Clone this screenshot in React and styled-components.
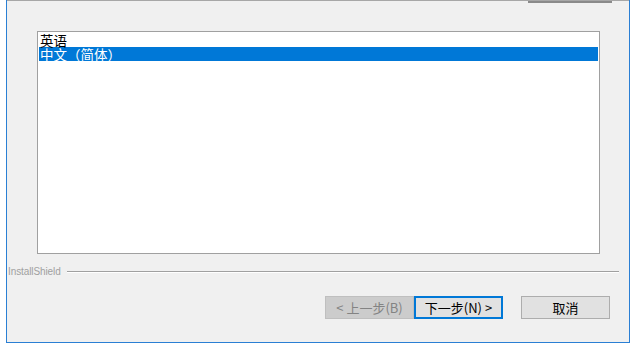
import React, { useState } from "react";
import styled, { createGlobalStyle } from "styled-components";

const GlobalStyle = createGlobalStyle`
  html, body {
    margin: 0;
    padding: 0;
    background: #ffffff;
  }
  body {
    font-family: "Noto Sans CJK SC", "Liberation Sans", sans-serif;
  }
`;

const Window = styled.div`
  box-sizing: border-box;
  width: 624px;
  height: 343px;
  margin-left: 6px;
  background: #f0f0f0;
  border-left: 1px solid #2a7fd4;
  border-right: 1px solid #2a7fd4;
  border-bottom: 1px solid #2a7fd4;
  display: flex;
  flex-direction: column;
`;

const TopEdge = styled.div`
  display: flex;
  justify-content: flex-end;
  height: 3px;
  border-top: 1px solid #a7a7a7;
  box-sizing: border-box;
`;

const ButtonStub = styled.div`
  width: 84px;
  height: 2px;
  margin-right: 17px;
  background: #8a8a8a;
`;

const ListBox = styled.ul`
  box-sizing: border-box;
  list-style: none;
  margin: 28px 0 0 30px;
  padding: 1px;
  width: 563px;
  height: 223px;
  background: #ffffff;
  border: 1px solid #a0a0a0;
`;

const Item = styled.li`
  height: 14px;
  line-height: 14px;
  font-size: 13.5px;
  padding-left: 1px;
  color: ${(p) => (p.$selected ? "#ffffff" : "#000000")};
  background: ${(p) => (p.$selected ? "#0078d7" : "transparent")};
  cursor: default;
  white-space: nowrap;
`;

const BrandRow = styled.div`
  display: flex;
  align-items: center;
  gap: 6px;
  margin: 12px 10px 0 1px;
`;

const Brand = styled.span`
  font-family: "Liberation Sans", Arial, sans-serif;
  font-size: 10px;
  letter-spacing: -0.1px;
  color: #a0a0a0;
`;

const Rule = styled.div`
  flex: 1;
  height: 1px;
  background: #a0a0a0;
  border-bottom: 1px solid #ffffff;
`;

const ButtonRow = styled.div`
  display: flex;
  justify-content: flex-end;
  margin: 19px 19px 0 0;
`;

const Button = styled.button`
  box-sizing: border-box;
  width: 89px;
  height: 23px;
  margin-left: ${(p) => p.$gap || 0}px;
  padding: 0;
  font-family: "Noto Sans CJK SC", "Liberation Sans", sans-serif;
  font-size: 13px;
  line-height: 19px;
  background: ${(p) => (p.disabled ? "#cccccc" : "#e1e1e1")};
  color: ${(p) => (p.disabled ? "#838383" : "#000000")};
  border: ${(p) =>
    p.$focus ? "2px solid #0078d7" : p.disabled ? "1px solid #bfbfbf" : "1px solid #adadad"};
  outline: none;
  white-space: nowrap;
`;

const languages = ["英语", "中文（简体）"];

export default function App() {
  const [sel, setSel] = useState(1);

  return (
    <>
      <GlobalStyle />
      <Window>
        <TopEdge>
          <ButtonStub />
        </TopEdge>
        <ListBox>
          {languages.map((l, i) => (
            <Item key={l} $selected={i === sel} onClick={() => setSel(i)}>
              {l}
            </Item>
          ))}
        </ListBox>
        <BrandRow>
          <Brand>InstallShield</Brand>
          <Rule />
        </BrandRow>
        <ButtonRow>
          <Button disabled>&lt; 上一步(B)</Button>
          <Button $focus>下一步(N) &gt;</Button>
          <Button $gap={18}>取消</Button>
        </ButtonRow>
      </Window>
    </>
  );
}
